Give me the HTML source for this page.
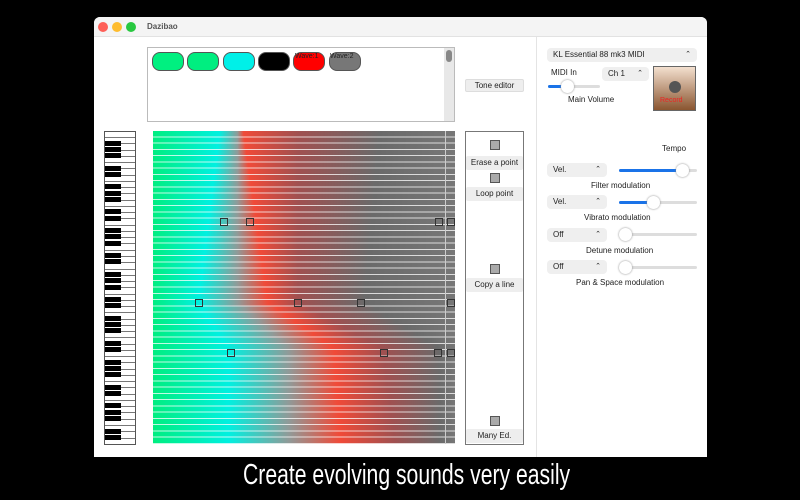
<!DOCTYPE html>
<html><head><meta charset="utf-8"><style>
*{box-sizing:border-box;margin:0;padding:0}
body{width:800px;height:500px;background:#000;position:relative;overflow:hidden;font-family:"Liberation Sans",sans-serif;}
.win{position:absolute;left:94px;top:17px;width:613px;height:440px;background:#fff;border-radius:6px 6px 0 0;overflow:hidden}
.tb{position:absolute;left:0;top:0;width:100%;height:20px;background:#f4f4f4;border-bottom:1px solid #e2e2e2}
.dot{position:absolute;top:5px;width:10px;height:10px;border-radius:50%}
.t{position:absolute;font-size:8px;color:#222;white-space:nowrap}
.btn{position:absolute;background:#eee;border:1px solid #ddd;border-radius:2px;font-size:8px;text-align:center;color:#222}
.sel{position:absolute;background:#efefef;border-radius:4px;font-size:8px;color:#222;padding-left:6px;line-height:14px;height:14px}
.sel:after{content:"⌃";position:absolute;right:6px;top:0;font-size:7px}
.sq{position:absolute;width:10px;height:10px;background:#aaa;border:1px solid #555}
.trk{position:absolute;height:3px;background:#ddd;border-radius:2px}
.fill{position:absolute;left:0;top:0;height:3px;background:#1a73e8;border-radius:2px}
.knob{position:absolute;top:-5px;width:13px;height:13px;border-radius:50%;background:#fff;box-shadow:0 0 2px #888}
.pill{position:absolute;top:35px;width:32px;height:19px;border-radius:8px;border:1.5px solid #555}
.mk{position:absolute;width:8px;height:8px;border:1px solid #333}
</style></head><body>
<div class="win">
<div class="tb"><div class="dot" style="left:4px;background:#fe5f57"></div><div class="dot" style="left:18px;background:#febc2e"></div><div class="dot" style="left:32px;background:#28c840"></div><div class="t" style="left:53px;top:5px;font-weight:bold;color:#555">Dazibao</div></div>
<div style="position:absolute;left:53px;top:30px;width:308px;height:75px;border:1px solid #bbb;background:#fff"></div>
<div style="position:absolute;left:350px;top:31px;width:10px;height:73px;background:#e8e8e8"></div>
<div style="position:absolute;left:352px;top:33px;width:6px;height:12px;background:#888;border-radius:3px"></div>
<div class="pill" style="left:58px;background:#00f080"></div>
<div class="pill" style="left:93px;background:#00ee80"></div>
<div class="pill" style="left:129px;background:#00f0e8"></div>
<div class="pill" style="left:164px;background:#000"></div>
<div class="pill" style="left:199px;background:#f00"></div>
<div class="pill" style="left:235px;background:#777"></div>
<div class="t" style="left:201px;top:36px;font-size:7px">Wave:1</div>
<div class="t" style="left:236px;top:36px;font-size:7px">Wave:2</div>
<div class="btn" style="left:371px;top:62px;width:59px;height:13px;line-height:12px">Tone editor</div>
<div id="piano" style="position:absolute;left:10px;top:114px;width:32px;height:314px;border:1px solid #555;background:#fff;overflow:hidden"></div>
<div id="grid" style="position:absolute;left:59px;top:114px;width:302px;height:313px;overflow:hidden"></div>
<div style="position:absolute;left:371px;top:114px;width:59px;height:314px;border:1px solid #777;background:#fff"></div>
<div class="sq" style="left:396px;top:123px"></div><div class="btn" style="left:372px;top:139px;width:57px;height:14px;line-height:14px;border:none">Erase a point</div>
<div class="sq" style="left:396px;top:156px"></div><div class="btn" style="left:372px;top:170px;width:57px;height:14px;line-height:14px;border:none">Loop point</div>
<div class="sq" style="left:396px;top:247px"></div><div class="btn" style="left:372px;top:261px;width:57px;height:14px;line-height:14px;border:none">Copy a line</div>
<div class="sq" style="left:396px;top:399px"></div><div class="btn" style="left:372px;top:412px;width:57px;height:14px;line-height:14px;border:none">Many Ed.</div>
<div style="position:absolute;left:442px;top:20px;width:1px;height:420px;background:#e4e4e4"></div>
<div class="sel" style="left:453px;top:31px;width:150px">KL Essential 88 mk3 MIDI</div>
<div class="t" style="left:457px;top:51px">MIDI In</div>
<div class="sel" style="left:508px;top:50px;width:47px">Ch 1</div>
<div style="position:absolute;left:559px;top:49px;width:43px;height:45px;background:linear-gradient(#f3e0cf,#8a5530);border:1px solid #666"></div>
<div style="position:absolute;left:575px;top:64px;width:12px;height:12px;border-radius:50%;background:#555"></div>
<div class="t" style="left:566px;top:80px;color:#e22;font-size:7px">Record</div>
<div class="trk" style="left:454px;top:68px;width:52px"><div class="fill" style="width:16px"></div><div class="knob" style="left:13px"></div></div>
<div class="t" style="left:474px;top:78px">Main Volume</div>
<div class="t" style="left:568px;top:127px">Tempo</div>
<div class="sel" style="left:453px;top:146px;width:60px">Vel.</div>
<div class="trk" style="left:525px;top:152px;width:78px"><div class="fill" style="width:62px"></div><div class="knob" style="left:57px"></div></div>
<div class="t" style="left:497px;top:164px">Filter modulation</div>
<div class="sel" style="left:453px;top:178px;width:60px">Vel.</div>
<div class="trk" style="left:525px;top:184px;width:78px"><div class="fill" style="width:32px"></div><div class="knob" style="left:28px"></div></div>
<div class="t" style="left:490px;top:196px">Vibrato modulation</div>
<div class="sel" style="left:453px;top:211px;width:60px">Off</div>
<div class="trk" style="left:525px;top:216px;width:78px"><div class="knob" style="left:0px"></div></div>
<div class="t" style="left:492px;top:229px">Detune modulation</div>
<div class="sel" style="left:453px;top:243px;width:60px">Off</div>
<div class="trk" style="left:525px;top:249px;width:78px"><div class="knob" style="left:0px"></div></div>
<div class="t" style="left:482px;top:261px">Pan &amp; Space modulation</div>
</div>
<div style="position:absolute;left:243px;top:458px;color:#fff;font-size:29px;line-height:34px;font-family:'Liberation Sans',sans-serif;white-space:nowrap;transform-origin:left;transform:scaleX(0.73)">Create evolving sounds very easily</div>
<script>
var g=document.getElementById('grid'),h='',N=50,rh=313/N;
var A=[[0,[0,22,28,30,48,75,100]],[0.55,[0,15,28,38,48,70,100]],[0.7,[0,25,45,60,76,95,100]],[1,[0,25,45,62,80,95,100]]];
var C=['#00ee80','#00f0e0','#909a98','#f04a38','#a05050','#6a6a6a','#777'];
function lerp(a,b,t){return a+(b-a)*t}
for(var i=0;i<N;i++){var f=i/(N-1),k=0;while(k<A.length-2&&f>A[k+1][0])k++;var t=(f-A[k][0])/(A[k+1][0]-A[k][0]);t=Math.max(0,Math.min(1,t));
var s=[];for(var j=0;j<7;j++)s.push(C[j]+' '+lerp(A[k][1][j],A[k+1][1][j],t).toFixed(1)+'%');
h+='<div style="position:absolute;left:0;top:'+(i*rh).toFixed(2)+'px;width:302px;height:'+(rh+1).toFixed(2)+'px;background:linear-gradient(90deg,'+s.join(',')+')"></div>';}
h+='<div style="position:absolute;left:0;top:0;width:302px;height:313px;background:repeating-linear-gradient(180deg,transparent 0,transparent 5.26px,rgba(255,255,255,.75) 5.26px,rgba(255,255,255,.75) 6.26px)"></div>';
h+='<div style="position:absolute;left:292px;top:0;width:1px;height:313px;background:#ccc"></div>';
var m=[[71,91],[97,91],[286,91],[298,91],[46,172],[145,172],[208,172],[298,172],[78,222],[231,222],[285,222],[298,222]];
m.forEach(function(p){h+='<div class="mk" style="left:'+(p[0]-4)+'px;top:'+(p[1]-4)+'px"></div>'});
g.innerHTML=h;g.style.background='#fff';
var pn=document.getElementById('piano'),ph='';
for(var i=0;i<50;i++)ph+='<div style="position:absolute;left:0;top:'+(i*6.26+5).toFixed(1)+'px;width:32px;height:1px;background:#777"></div>';
var pat=[1,1,1,0,1,1,0];var y=5;
for(var i=0;i<49;i++){if(pat[i%7])ph+='<div style="position:absolute;left:0;top:'+(y+i*6.26+3.5).toFixed(1)+'px;width:16px;height:5px;background:#000"></div>';}
pn.innerHTML=ph;
</script>
</body></html>
